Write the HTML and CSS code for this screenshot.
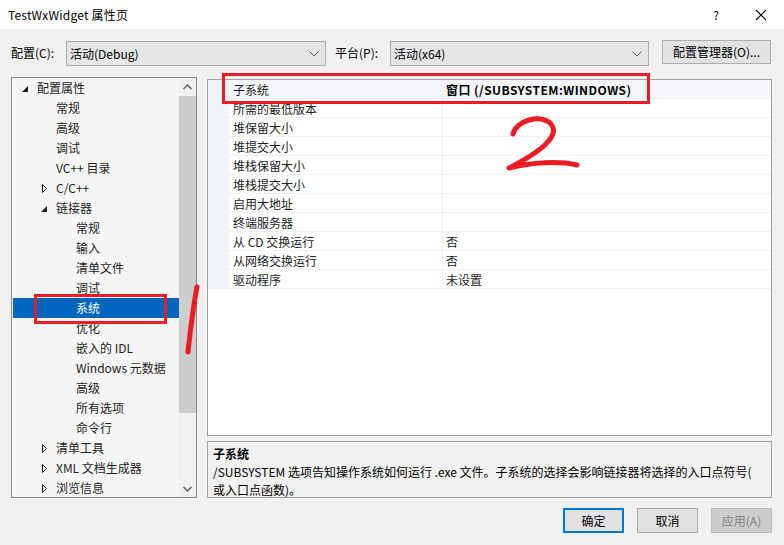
FILE: index.html
```html
<!DOCTYPE html>
<html lang="zh-CN">
<head>
<meta charset="utf-8">
<title>TestWxWidget 属性页</title>
<link rel="stylesheet" href="styles.css">
</head>
<body>
<div class="window">
  <div class="titlebar">
    <span class="title">TestWxWidget 属性页</span>
    <span class="tb-help">?</span>
    <span class="tb-close"><svg width="12" height="12" viewBox="0 0 12 12"><path d="M1 1 L11 11 M11 1 L1 11" stroke="#000" stroke-width="1.1" fill="none"/></svg></span>
  </div>

  <div class="toolbar">
    <span class="tlabel">配置(C):</span>
    <div class="combo combo-cfg"><span>活动(Debug)</span><svg class="chev" width="10" height="6" viewBox="0 0 10 6"><path d="M0.5 0.5 L5 5 L9.5 0.5" stroke="#555" fill="none"/></svg></div>
    <span class="tlabel tlabel-plat">平台(P):</span>
    <div class="combo combo-plat"><span>活动(x64)</span><svg class="chev" width="10" height="6" viewBox="0 0 10 6"><path d="M0.5 0.5 L5 5 L9.5 0.5" stroke="#555" fill="none"/></svg></div>
    <button class="btn btn-mgr">配置管理器(O)...</button>
  </div>

  <div class="main">
    <div class="tree">
      <div class="tree-list">
        <div class="node l0"><svg class="exp" width="6" height="6" viewBox="0 0 6 6"><path d="M6 0 L6 6 L0 6 Z" fill="#1e1e1e"/></svg>配置属性</div>
        <div class="node l1">常规</div>
        <div class="node l1">高级</div>
        <div class="node l1">调试</div>
        <div class="node l1">VC++ 目录</div>
        <div class="node l1"><svg class="col" width="5" height="9" viewBox="0 0 5 9"><path d="M0.5 0.5 L4.5 4.5 L0.5 8.5 Z" fill="none" stroke="#1e1e1e"/></svg>C/C++</div>
        <div class="node l1"><svg class="exp" width="6" height="6" viewBox="0 0 6 6"><path d="M6 0 L6 6 L0 6 Z" fill="#1e1e1e"/></svg>链接器</div>
        <div class="node l2">常规</div>
        <div class="node l2">输入</div>
        <div class="node l2">清单文件</div>
        <div class="node l2">调试</div>
        <div class="node l2 selected">系统</div>
        <div class="node l2">优化</div>
        <div class="node l2">嵌入的 IDL</div>
        <div class="node l2">Windows 元数据</div>
        <div class="node l2">高级</div>
        <div class="node l2">所有选项</div>
        <div class="node l2">命令行</div>
        <div class="node l1"><svg class="col" width="5" height="9" viewBox="0 0 5 9"><path d="M0.5 0.5 L4.5 4.5 L0.5 8.5 Z" fill="none" stroke="#1e1e1e"/></svg>清单工具</div>
        <div class="node l1"><svg class="col" width="5" height="9" viewBox="0 0 5 9"><path d="M0.5 0.5 L4.5 4.5 L0.5 8.5 Z" fill="none" stroke="#1e1e1e"/></svg>XML 文档生成器</div>
        <div class="node l1"><svg class="col" width="5" height="9" viewBox="0 0 5 9"><path d="M0.5 0.5 L4.5 4.5 L0.5 8.5 Z" fill="none" stroke="#1e1e1e"/></svg>浏览信息</div>
      </div>
      <div class="vscroll">
        <div class="sb-btn"><svg width="9" height="6" viewBox="0 0 9 6"><path d="M0.5 5 L4.5 1 L8.5 5" stroke="#606060" stroke-width="1.4" fill="none"/></svg></div>
        <div class="sb-track"><div class="sb-thumb"></div></div>
        <div class="sb-btn"><svg width="9" height="6" viewBox="0 0 9 6"><path d="M0.5 1 L4.5 5 L8.5 1" stroke="#606060" stroke-width="1.4" fill="none"/></svg></div>
      </div>
    </div>

    <div class="rightcol">
      <div class="grid">
        <div class="row current"><span class="gut"></span><span class="name">子系统</span><span class="val bold">窗口 (/SUBSYSTEM:WINDOWS)</span></div>
        <div class="row"><span class="gut"></span><span class="name">所需的最低版本</span><span class="val"></span></div>
        <div class="row"><span class="gut"></span><span class="name">堆保留大小</span><span class="val"></span></div>
        <div class="row"><span class="gut"></span><span class="name">堆提交大小</span><span class="val"></span></div>
        <div class="row"><span class="gut"></span><span class="name">堆栈保留大小</span><span class="val"></span></div>
        <div class="row"><span class="gut"></span><span class="name">堆栈提交大小</span><span class="val"></span></div>
        <div class="row"><span class="gut"></span><span class="name">启用大地址</span><span class="val"></span></div>
        <div class="row"><span class="gut"></span><span class="name">终端服务器</span><span class="val"></span></div>
        <div class="row"><span class="gut"></span><span class="name">从 CD 交换运行</span><span class="val">否</span></div>
        <div class="row"><span class="gut"></span><span class="name">从网络交换运行</span><span class="val">否</span></div>
        <div class="row"><span class="gut"></span><span class="name">驱动程序</span><span class="val">未设置</span></div>
      </div>
      <div class="desc">
        <div class="desc-title">子系统</div>
        <div class="desc-text">/SUBSYSTEM 选项告知操作系统如何运行 .exe 文件。子系统的选择会影响链接器将选择的入口点符号(<br>或入口点函数)。</div>
      </div>
    </div>
  </div>

  <div class="footer">
    <button class="btn btn-ok">确定</button>
    <button class="btn">取消</button>
    <button class="btn btn-disabled">应用(A)</button>
  </div>

  <div class="mark mark-box1"></div>
  <div class="mark mark-box2"></div>
  <svg class="mark-draw" width="784" height="545" viewBox="0 0 784 545">
    <path d="M197 287 C194 302 191 325 188 352" stroke="#ed1c24" stroke-width="5" stroke-linecap="round" fill="none"/>
    <path d="M513 134 C516 121 540 113 551 124 C561 136 540 152 509 168 C532 162 560 161 577 165" stroke="#ed1c24" stroke-width="5" stroke-linecap="round" stroke-linejoin="round" fill="none"/>
  </svg>
</div>
</body>
</html>
```

FILE: styles.css
```css
* { box-sizing: border-box; }
html, body { margin: 0; padding: 0; }
body {
  background: #f0f0f0;
  font-family: "Noto Sans CJK SC", "Noto Sans", sans-serif;
  font-size: 12px;
  color: #000;
}
.window {
  position: relative;
  width: 784px;
  height: 545px;
  overflow: hidden;
}
.titlebar {
  height: 29px;
  background: #fff;
  display: flex;
  align-items: center;
  padding-left: 8px;
}
.title { flex: 1; font-size: 12px; line-height: 16px; letter-spacing: 0.2px; }
.tb-help { width: 14px; text-align: center; font-size: 12px; margin-right: 32px; }
.tb-close { width: 12px; height: 12px; margin-right: 17px; display: flex; }

.toolbar {
  margin-top: 11px;
  height: 26px;
  display: flex;
  align-items: flex-start;
  padding-left: 11px;
}
.tlabel { width: 55px; line-height: 26px; }
.tlabel-plat { margin-left: 9px; }
.combo {
  margin-top: 1px;
  height: 25px;
  background: #e5e5e5;
  border: 1px solid #acacac;
  display: flex;
  align-items: center;
  justify-content: space-between;
  padding: 0 6px 0 3px;
  line-height: 16px;
}
.combo-cfg { width: 260px; }
.combo-plat { width: 259px; }
.chev { display: block; }
.btn {
  font-family: inherit;
  font-size: 12px;
  color: #000;
  background: #e1e1e1;
  border: 1px solid #adadad;
  padding: 0;
  height: 25px;
  line-height: 16px;
}
.btn-mgr { margin-left: 13px; width: 109px; height: 24px; }

.main {
  margin-top: 11px;
  display: flex;
  align-items: flex-start;
  padding-left: 11px;
}
.tree {
  width: 186px;
  height: 421px;
  border: 1px solid #828790;
  background: #f5f5f5;
  display: flex;
  padding-left: 1px;
}
.tree-list { width: 166px; overflow: hidden; }
.node {
  height: 20px;
  line-height: 20px;
  white-space: nowrap;
  position: relative;
  color: #1e1e1e;
}
.node.l0 { padding-left: 24px; }
.node.l1 { padding-left: 43px; }
.node.l2 { padding-left: 63px; }
.node.selected { background: #0066bf; color: #fff; }
.node .exp { position: absolute; top: 8px; }
.node.l0 .exp { left: 9px; }
.node.l1 .exp { left: 28px; }
.node .col { position: absolute; top: 6px; left: 29px; }

.vscroll {
  width: 17px;
  display: flex;
  flex-direction: column;
  background: #f0f0f0;
}
.sb-btn { height: 17px; display: flex; align-items: center; justify-content: center; }
.sb-track { flex: 1; padding-top: 1px; }
.sb-thumb { height: 317px; background: #cdcdcd; }

.rightcol { margin-left: 10px; width: 565px; margin-top: 2px; }
.grid {
  height: 357px;
  background: #fff;
  border: 1px solid #a0a0a0;
}
.row {
  display: flex;
  height: 19px;
  line-height: 18px;
}
.gut { width: 21px; background: #f0f4f9; }
.name {
  width: 214px;
  padding-left: 4px;
  padding-top: 1px;
  border-bottom: 1px solid #f0f0f0;
  border-right: 1px solid #f0f0f0;
  color: #1e1e1e;
}
.val {
  flex: 1;
  padding-left: 3px;
  padding-top: 1px;
  border-bottom: 1px solid #f0f0f0;
  color: #1e1e1e;
}
.row.current .name, .row.current .val { background: #f4f6fa; }
.bold { font-weight: bold; color: #000; letter-spacing: 0.45px; }

.desc {
  margin-top: 5px;
  height: 57px;
  border: 1px solid #a0a0a0;
  background: #f0f0f0;
  padding: 3px 0 0 5px;
  line-height: 18px;
}
.desc-title { font-weight: bold; }

.footer {
  margin-top: 10px;
  display: flex;
  justify-content: flex-end;
  gap: 13px;
  padding-right: 12px;
}
.footer .btn { width: 61px; height: 25px; }
.btn-ok { border: 2px solid #0078d7; }
.btn-disabled { background: #cccccc; border-color: #bfbfbf; color: #838383; }

.mark {
  position: absolute;
  border: 3px solid #ed1c24;
}
.mark-box1 { left: 34px; top: 294px; width: 133px; height: 30px; }
.mark-box2 { left: 222px; top: 73px; width: 428px; height: 31px; }
.mark-draw { position: absolute; left: 0; top: 0; pointer-events: none; }
```
